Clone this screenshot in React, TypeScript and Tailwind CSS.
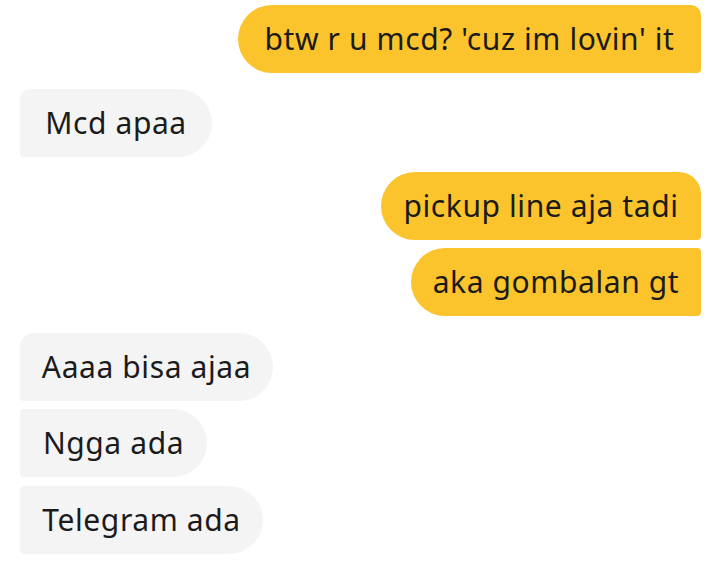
import React from "react";

type Msg = { text: string; me: boolean; cls: string; mt: string };

const msgs: Msg[] = [
  { text: "btw r u mcd? 'cuz im lovin' it", me: true, cls: "w-[463px] rounded-l-[34px] rounded-tr-[10px] rounded-br-[4px]", mt: "mt-0" },
  { text: "Mcd apaa", me: false, cls: "w-[192px] rounded-r-[34px] rounded-tl-[10px] rounded-bl-[4px]", mt: "mt-[16px]" },
  { text: "pickup line aja tadi", me: true, cls: "w-[320px] rounded-l-[34px] rounded-tr-[22px] rounded-br-[4px]", mt: "mt-[15px]" },
  { text: "aka gombalan gt", me: true, cls: "w-[290px] rounded-l-[34px] rounded-tr-[4px] rounded-br-[4px]", mt: "mt-[8px]" },
  { text: "Aaaa bisa ajaa", me: false, cls: "w-[253px] rounded-r-[34px] rounded-tl-[14px] rounded-bl-[4px]", mt: "mt-[17px]" },
  { text: "Ngga ada", me: false, cls: "w-[187px] rounded-r-[34px] rounded-tl-[4px] rounded-bl-[4px]", mt: "mt-[8px]" },
  { text: "Telegram ada", me: false, cls: "w-[243px] rounded-r-[34px] rounded-tl-[4px] rounded-bl-[4px]", mt: "mt-[9px]" },
];

export default function App() {
  return (
    <div
      className="w-[720px] h-[567px] bg-white flex flex-col pt-[5px] pl-[20px] pr-[19px]"
      style={{ fontFamily: "'Noto Sans', sans-serif" }}
    >
      {msgs.map((m, i) => (
        <div key={i} className={`flex ${m.me ? "justify-end" : "justify-start"} ${m.mt}`}>
          <div
            className={`${m.me ? "bg-[#fcc42c]" : "bg-[#f4f4f4]"} ${m.cls} h-[68px] flex items-center justify-center text-[30px] tracking-[0.6px] leading-none text-[#1b1b1b] whitespace-nowrap`}
          >
            {m.text}
          </div>
        </div>
      ))}
    </div>
  );
}
